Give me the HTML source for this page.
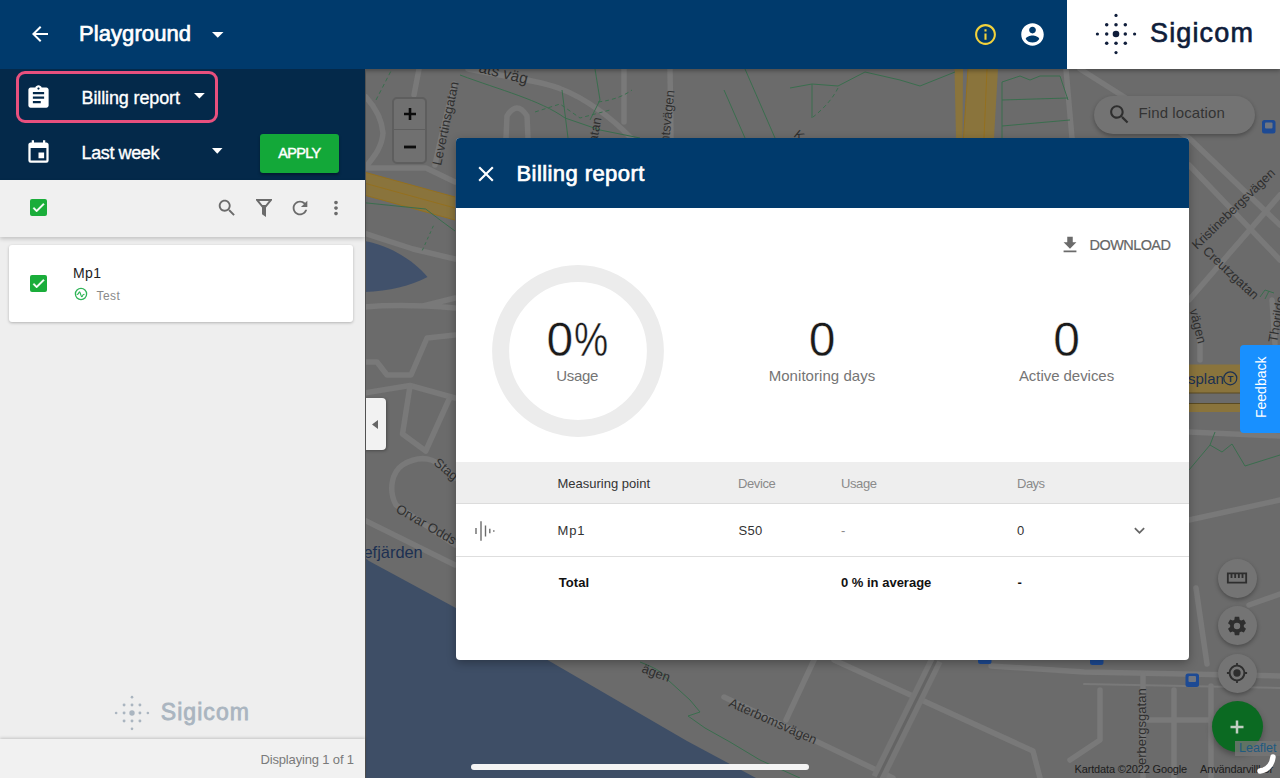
<!DOCTYPE html>
<html lang="en">
<head>
<meta charset="utf-8">
<title>Billing report</title>
<style>
*{box-sizing:border-box;margin:0;padding:0}
html,body{width:1280px;height:778px;overflow:hidden;background:#6b6b6b;font-family:"Liberation Sans",sans-serif;}
#map{position:absolute;left:364px;top:69px;width:916px;height:709px;background:#6b6b6b;overflow:hidden}
#hdr{position:absolute;left:0;top:0;width:1280px;height:69px;background:#003a6c;box-shadow:0 2px 4px rgba(0,0,0,.3)}
#logo{position:absolute;left:1067px;top:0;width:213px;height:69px;background:#fff}
#side{position:absolute;left:0;top:69px;width:365px;box-shadow:1px 0 0 #525252;height:709px;background:#eeeeee}
#dark{position:absolute;left:0;top:0;width:365px;height:111px;background:#04294a}
#tool{position:absolute;left:0;top:111px;width:365px;height:57px;background:#f0f0f0;box-shadow:0 2px 4px rgba(0,0,0,.18)}
#card{position:absolute;left:9px;top:176px;width:344px;height:77px;background:#fff;border-radius:3px;box-shadow:0 1px 3px rgba(0,0,0,.25)}
#foot{position:absolute;left:0;top:670px;width:365px;height:39px;background:#f1f1f1;box-shadow:0 -1px 3px rgba(0,0,0,.18)}
.cb{position:absolute;width:17px;height:17px;background:#1aad3a;border-radius:2px}
.cb svg{position:absolute;left:1px;top:1px;width:15px;height:15px}
#dlg{position:absolute;left:456px;top:138px;width:733px;height:522px;background:#fff;border-radius:4px;overflow:hidden;box-shadow:0 3px 10px rgba(0,0,0,.3)}
#dh{position:absolute;left:0;top:0;width:734px;height:70px;background:#003a6c}
#dli{position:absolute;left:-1px;top:0;width:734px;height:522px}
.big{-webkit-text-stroke:.45px #fff}
.t{position:absolute;white-space:nowrap;line-height:1}
.med{-webkit-text-stroke:.45px currentColor}
svg{position:absolute;overflow:visible}
.ic{fill:#6b6b6b}
.mt{font-family:"Liberation Sans",sans-serif;fill:#2f2f2f;font-size:13px}
</style>
</head>
<body>
<div id="map">
<svg width="916" height="709" viewBox="364 69 916 709" style="left:0;top:0">
  <!-- water -->
  <path d="M364 241 C385 244 412 258 427.500 277 C410 286 390 291 364 292Z" fill="#41516b"/>
  <path d="M364 557 L369 561 L454 607 L551 662 L687 741 L756 778 L364 778Z" fill="#3e4e66"/>
  <!-- light roads -->
  <g stroke="#797979" stroke-width="5.500" fill="none" stroke-linecap="round" stroke-linejoin="round">
    <path d="M468 69 C500 76 540 80 561 89 C585 98 612 118 631 138"/>
    <path d="M624 69 L624 122"/>
    <path d="M670 69 L671 138"/>
    <path d="M506 138 L507 116 Q517 100 527 116 L528 138"/>
    <path d="M454 84 C448 110 440 140 435 165"/>
    <path d="M366 97 C376 108 382 120 383 133 C382 146 376 155 364 169"/>
    <path d="M419 69 L414 95"/>
    <path d="M366 168 L426 168 L455 182"/>
    <path d="M364 233 L413 249 L455 259"/>
    <path d="M364 307 C400 304 430 306 455 308 M423 306 L455 298"/>
    <path d="M364 362 L377 362 L387 375 L411 375 L427 338 L455 335"/>
    <path d="M364 393 L410 385.500 L455 398"/>
    <path d="M410 386 L402.500 434 L425.700 451 L449 399.500"/>
    <path d="M455 478 C440 462 425.700 451 402.500 465 C392 472 388 490 396 505 L455 545"/>
    <path d="M364 520 L455 565"/>
    <path d="M1066 69 L1072 138"/>
    <path d="M1080 69 L1189 138 L1280 225"/>
    <path d="M1189 300 L1280 195"/>
    <path d="M1189 165 L1280 260"/>
    <path d="M1200 340 L1200 360 M1272 300 L1275 344"/>
    <path d="M1189 432 L1280 436"/>
    <path d="M1189 520 L1280 500"/>
    <path d="M1196 588 L1207 664"/>
    <path d="M1249 605 L1280 594"/>
    <path d="M724 697 L893 778"/>
    <path d="M834 660 L1033 751 L1040 778"/>
    <path d="M814 660 L786 720"/>
    <path d="M991 666 L1084 672 L1280 676"/>
    <path d="M1084 684 L1280 688" stroke-width="2"/>
    <path d="M1143 674 L1143 778"/>
    <path d="M1174 690 L1174 778"/>
    <path d="M1211 686 L1211 778"/>
    <path d="M1146 720 L1211 720"/>
    <path d="M1100 690 L1100 740 L1070 760"/>
  </g>
  <path d="M936 660 L878 778" stroke="#767676" stroke-width="14" fill="none"/>
  <path d="M936 660 L878 778" stroke="#646464" stroke-width="3" fill="none"/>
  <!-- yellow highways -->
  <path d="M364 172 L455 197 L455 220 L364 195Z" fill="#8a743c"/>
  <path d="M364 172 L455 197 M364 183 L455 208 M364 195 L455 220" stroke="#94701f" stroke-width="1" fill="none"/>
  <path d="M954.500 69 L963 69 L962.500 138 L956 138Z" fill="#8a743c"/>
  <path d="M968 69 L998 69 L994 138 L963.500 138Z" fill="#8a743c"/>
  <path d="M987 69 L984 138 M968 69 L963.500 138" stroke="#94701f" stroke-width="1" fill="none"/>
  <path d="M1189 364.500 L1240 364.500 L1240 393 L1189 393Z" fill="#8a743c"/>
  <path d="M1189 403.500 L1240 403.500 L1240 412 L1189 412Z" fill="#8a743c"/>
  <path d="M1189 393 L1240 393 M1189 403.500 L1240 403.500" stroke="#5a4a22" stroke-width="1" fill="none"/>
  <!-- green trails -->
  <g stroke="#3a6e4e" stroke-width="1" fill="none">
    <path d="M364 202.700 L425.700 209 L441 220.700 L455 231"/>
    <path d="M460 75 C500 90 540 100 565 118 L600 130 L640 138"/>
    <path d="M562 90 L568 138 M595 69 L600 100 L590 120" />
    <path d="M598 102 C615 100 625 95 632 90" stroke-dasharray="4 3"/>
    <path d="M535 112 L560 104 L580 118 L610 110" stroke-dasharray="4 3"/>
    <path d="M376 100 L392 69" stroke-dasharray="4 3"/>
    <path d="M433.400 225.800 L421.800 251.500" stroke-dasharray="3 3"/>
    <path d="M724 90 L745 138 M745 69 L775 138"/>
    <path d="M790 88 L812 84 L838 86 L865 72 L900 80 L920 86 L955 72"/>
    <path d="M812 84 L812 118" />
    <path d="M838 88 C832 100 822 110 813 117" stroke-dasharray="4 3"/>
    <path d="M1002 138 L1002 82 L1020 76 L1030 80 L1040 76 L1060 76 L1068 100"/>
    <path d="M1002 100 L1068 98 M1002 126 L1070 120"/>
    <path d="M640 662 C655 668 660 670 668 680 L690 700 L700 712 L688 716 L705 728 L730 742 L760 760 L800 778"/>
    <path d="M1189 470 L1210 445 L1215 432 M1210 445 L1222 452 L1232 444 L1245 466 L1280 455"/>
    <path d="M1260 297 L1265 290 L1274 293 M1269 291 L1265 299"/>
  </g>
  <!-- labels -->
  <text class="mt" transform="translate(441 166) rotate(-78)">Levertinsgatan</text>
  <text class="mt" style="font-size:12.800px" transform="translate(1197 250) rotate(-44)">Kristinebergsvägen</text>
  <text class="mt" transform="translate(1202 252) rotate(43)">Creutzgatan</text>
  <text class="mt" transform="translate(1189.500 310) rotate(76)">vägen</text>
  <text class="mt" transform="translate(1277 343) rotate(-80)">Thorilds</text>
  <text class="mt" transform="translate(728 706) rotate(24)">Atterbomsvägen</text>
  <text class="mt" transform="translate(641 672) rotate(20)">ägen</text>
  <text class="mt" transform="translate(1146 765) rotate(-90)">erbergsgatan</text>
  <text class="mt" transform="translate(395 511.500) rotate(30)">Orvar Odds</text>
  <text class="mt" transform="translate(433 464) rotate(40)">Stag</text>
  <text class="mt" transform="translate(669 143) rotate(-84)">htsvägen</text>
  <text class="mt" transform="translate(597 143) rotate(-80)">atan</text>
  <text class="mt" style="font-size:15.500px" transform="translate(478 72) rotate(14)">ats väg</text>
  <text class="mt" transform="translate(793 136) rotate(40)">K</text>
  <text class="mt" style="font-size:16.400px;fill:#1c3052" x="363.500" y="557.500">efjärden</text>
  <text class="mt" style="font-size:15px;fill:#1c3052" x="1188" y="384">splan</text>
  <circle cx="1230.300" cy="378.300" r="6.500" fill="none" stroke="#1c3052" stroke-width="1.200"/>
  <text class="mt" style="font-size:9.500px;fill:#1c3052;font-weight:700" x="1227.400" y="381.800">T</text>
  <!-- bus -->
  <g fill="#1d4a94">
  <rect x="1185.500" y="673.500" width="13.500" height="13.500" rx="2.500"/>
  <rect x="1262" y="120" width="13.500" height="13.500" rx="2.500"/>
  <rect x="1090" y="652" width="13.500" height="13" rx="2.500"/>
  <rect x="978" y="652" width="13.500" height="12" rx="2.500"/>
  </g>
  <g fill="#707680"><rect x="1188.500" y="676" width="7.500" height="6" rx="1"/><rect x="1265" y="122.500" width="7.500" height="6" rx="1"/></g>
</svg>

<!-- zoom control -->
<div style="position:absolute;left:28px;top:28px;width:35px;height:67px;background:#707070;border:2px solid #5e5e5e;border-radius:5px"></div>
<div style="position:absolute;left:30px;top:60px;width:31px;height:1px;background:#5e5e5e"></div>
<svg width="14" height="14" viewBox="0 0 14 14" style="left:38.500px;top:38px"><path d="M7 1v12M1 7h12" stroke="#0c0c0c" stroke-width="2.6" fill="none"/></svg>
<svg width="14" height="4" viewBox="0 0 14 4" style="left:38.500px;top:75.500px"><path d="M1 2h12" stroke="#0c0c0c" stroke-width="2.8" fill="none"/></svg>

<!-- find location -->
<div style="position:absolute;left:729.500px;top:26.500px;width:161px;height:38.500px;border-radius:20px;background:#737373;box-shadow:0 2px 4px rgba(0,0,0,.3)"></div>
<svg width="25" height="25" viewBox="0 0 24 24" style="left:742.700px;top:33px"><path fill="#2e2e2e" d="M15.500 14h-.79l-.28-.27C15.410 12.590 16 11.110 16 9.500 16 5.910 13.090 3 9.500 3S3 5.910 3 9.500 5.910 16 9.500 16c1.610 0 3.090-.59 4.230-1.570l.27.280v.79l5 4.990L20.490 19l-4.990-5zm-6 0C7.010 14 5 11.990 5 9.500S7.010 5 9.500 5 14 7.010 14 9.500 11.990 14 9.500 14z"/></svg>
<div class="t" style="left:774.500px;top:35.500px;font-size:15px;color:#333;letter-spacing:.1px">Find location</div>

<!-- feedback -->
<div style="position:absolute;left:875.500px;top:275.500px;width:41px;height:88px;background:#1890ff;border-radius:4px 0 0 4px"></div>
<div class="t" style="left:867px;top:312px;width:60px;text-align:center;font-size:14px;color:#fff;transform:rotate(-90deg);transform-origin:50% 50%">Feedback</div>

<!-- round buttons -->
<div style="position:absolute;left:853.500px;top:489.500px;width:39px;height:39px;border-radius:50%;background:#747474;box-shadow:0 2px 4px rgba(0,0,0,.3)"></div>
<div style="position:absolute;left:853.500px;top:537px;width:39px;height:39px;border-radius:50%;background:#747474;box-shadow:0 2px 4px rgba(0,0,0,.3)"></div>
<div style="position:absolute;left:853.500px;top:584.500px;width:39px;height:39px;border-radius:50%;background:#747474;box-shadow:0 2px 4px rgba(0,0,0,.3)"></div>
<svg width="22" height="22" viewBox="0 0 24 24" style="left:862px;top:498px"><path fill="#2e2e2e" d="M1 6v12h22V6H1zm20 10H3V8h2v4h2V8h2v4h2V8h2v4h2V8h2v4h2V8h2v8z"/></svg>
<svg width="22" height="22" viewBox="0 0 24 24" style="left:862px;top:545.500px"><path fill="#2e2e2e" d="M12,15.500A3.500,3.500 0 0,1 8.500,12A3.500,3.500 0 0,1 12,8.500A3.500,3.500 0 0,1 15.500,12A3.500,3.500 0 0,1 12,15.500M19.430,12.970C19.470,12.650 19.500,12.330 19.500,12C19.500,11.670 19.470,11.340 19.430,11L21.540,9.370C21.730,9.220 21.780,8.950 21.660,8.730L19.660,5.270C19.540,5.050 19.270,4.960 19.050,5.050L16.560,6.050C16.040,5.660 15.500,5.320 14.870,5.070L14.500,2.420C14.460,2.180 14.250,2 14,2H10C9.750,2 9.540,2.180 9.500,2.420L9.130,5.070C8.500,5.320 7.960,5.660 7.440,6.050L4.950,5.050C4.730,4.960 4.460,5.050 4.340,5.270L2.340,8.730C2.210,8.950 2.270,9.220 2.460,9.370L4.570,11C4.530,11.340 4.500,11.670 4.500,12C4.500,12.330 4.530,12.650 4.570,12.970L2.460,14.630C2.270,14.780 2.210,15.050 2.340,15.270L4.340,18.730C4.460,18.950 4.730,19.030 4.950,18.950L7.440,17.940C7.960,18.340 8.500,18.680 9.130,18.930L9.500,21.580C9.540,21.820 9.750,22 10,22H14C14.250,22 14.460,21.820 14.500,21.580L14.870,18.930C15.500,18.670 16.040,18.340 16.560,17.940L19.050,18.950C19.270,19.030 19.540,18.950 19.660,18.730L21.660,15.270C21.780,15.050 21.730,14.780 21.540,14.630L19.430,12.970Z"/></svg>
<svg width="22" height="22" viewBox="0 0 24 24" style="left:862px;top:593px"><path fill="#2e2e2e" d="M12,8A4,4 0 0,1 16,12A4,4 0 0,1 12,16A4,4 0 0,1 8,12A4,4 0 0,1 12,8M3.050,13H1V11H3.050C3.500,6.830 6.830,3.500 11,3.050V1H13V3.050C17.170,3.500 20.500,6.830 20.950,11H23V13H20.950C20.500,17.170 17.170,20.500 13,20.950V23H11V20.950C6.830,20.500 3.500,17.170 3.050,13M12,5A7,7 0 0,0 5,12A7,7 0 0,0 12,19A7,7 0 0,0 19,12A7,7 0 0,0 12,5Z"/></svg>

<!-- fab -->
<div style="position:absolute;left:847.500px;top:632px;width:51px;height:51px;border-radius:50%;background:#0b6a22;box-shadow:0 3px 6px rgba(0,0,0,.3)"></div>
<svg width="16" height="16" viewBox="0 0 16 16" style="left:865px;top:649.500px"><path d="M8 1.500v13M1.500 8h13" stroke="#c2cec2" stroke-width="2.500" fill="none"/></svg>

<!-- attribution -->
<div style="position:absolute;left:870.500px;top:671.500px;width:46px;height:15.500px;background:rgba(118,118,118,.8)"></div>
<div class="t" style="left:875px;top:673px;font-size:12.500px;color:#1f5a80">Leaflet</div>
<div class="t" style="left:710.500px;top:695px;font-size:11px;color:#1c1c1c;letter-spacing:-.15px">Kartdata ©2022 Google</div>
<div class="t" style="left:836px;top:695px;font-size:11px;color:#1c1c1c;letter-spacing:-.15px">Användarvillkor</div>
<svg width="20" height="20" viewBox="0 0 20 20" style="left:894px;top:685px"><path d="M2 17 C9 16 14 11 15 3" stroke="#fff" stroke-width="5.500" fill="none" stroke-linecap="round"/></svg>

<!-- home indicator -->
<div style="position:absolute;left:107px;top:694.500px;width:338px;height:6.500px;border-radius:4px;background:#f4f4f4"></div>

<!-- sidebar handle -->
<div style="position:absolute;left:0;top:329px;width:22px;height:52px;background:#f2f2f2;border-radius:0 4px 4px 0;box-shadow:1px 1px 3px rgba(0,0,0,.3)"></div>
<svg width="6" height="9" viewBox="0 0 6 9" style="left:7.500px;top:350.500px"><path d="M6 0v9L0 4.500z" fill="#666"/></svg>
</div>
<div id="hdr">
  <svg width="24" height="24" viewBox="0 0 24 24" style="left:28px;top:22.300px"><path fill="#fff" d="M20 11H7.830l5.590-5.590L12 4l-8 8 8 8 1.410-1.410L7.830 13H20v-2z"/></svg>
  <div class="t" style="left:79px;top:22.500px;font-size:22px;color:#fff;letter-spacing:.08px;-webkit-text-stroke:.7px #fff">Playground</div>
  <svg width="12" height="6" viewBox="0 0 12 6" style="left:211.500px;top:31.500px"><path d="M0 0h11.500L5.750 5.700z" fill="#fff"/></svg>
  <svg width="25" height="25" viewBox="0 0 24 24" style="left:972.800px;top:21.500px"><path fill="#f2d23c" d="M11 7h2v2h-2zm0 4h2v6h-2zm1-9C6.480 2 2 6.480 2 12s4.480 10 10 10 10-4.480 10-10S17.520 2 12 2zm0 18c-4.410 0-8-3.590-8-8s3.590-8 8-8 8 3.590 8 8-3.590 8-8 8z"/></svg>
  <svg width="27" height="27" viewBox="0 0 24 24" style="left:1018.500px;top:20.500px"><path fill="#fff" d="M12 2C6.480 2 2 6.480 2 12s4.480 10 10 10 10-4.480 10-10S17.520 2 12 2zm0 3c1.660 0 3 1.340 3 3s-1.340 3-3 3-3-1.340-3-3 1.340-3 3-3zm0 14.200c-2.500 0-4.710-1.280-6-3.220.03-1.990 4-3.080 6-3.080 1.990 0 5.970 1.090 6 3.080-1.290 1.940-3.500 3.220-6 3.220z"/></svg>
  <div id="logo">
    <svg width="60" height="60" viewBox="-30 -30 60 60" style="left:18.600px;top:3.800px" fill="#0f1d3a">
      <circle cx="0" cy="0" r="3.300"/>
      <circle cx="9.300" cy="0" r="1.750"/><circle cx="-9.300" cy="0" r="1.750"/>
      <circle cx="0" cy="9.300" r="1.750"/><circle cx="0" cy="-9.300" r="1.750"/>
      <circle cx="9.300" cy="9.300" r="1.750"/><circle cx="-9.300" cy="9.300" r="1.750"/>
      <circle cx="9.300" cy="-9.300" r="1.750"/><circle cx="-9.300" cy="-9.300" r="1.750"/>
      <circle cx="18.600" cy="0" r="1.600"/><circle cx="-18.600" cy="0" r="1.600"/>
      <circle cx="0" cy="18.600" r="1.600"/><circle cx="0" cy="-18.600" r="1.600"/>
    </svg>
    <div class="t" style="left:83px;top:20.300px;font-size:27px;color:#0f1d3a;-webkit-text-stroke:.65px #0f1d3a;letter-spacing:1.150px">Sigicom</div>
  </div>
</div>
<div id="side">
  <div id="dark">
    <div style="position:absolute;left:16.300px;top:2px;width:202px;height:52px;border:3.300px solid #e8507e;border-radius:9px"></div>
    <svg width="27" height="27" viewBox="0 0 24 24" style="left:25px;top:15px"><path fill="#fff" d="M19 3h-4.180C14.400 1.840 13.300 1 12 1c-1.300 0-2.400.84-2.820 2H5c-1.100 0-2 .9-2 2v14c0 1.100.9 2 2 2h14c1.100 0 2-.9 2-2V5c0-1.100-.9-2-2-2zm-7 0c.55 0 1 .45 1 1s-.45 1-1 1-1-.45-1-1 .45-1 1-1zm2 14H7v-2h7v2zm3-4H7v-2h10v2zm0-4H7V7h10v2z"/></svg>
    <div class="t" style="left:81.500px;top:19.500px;font-size:18px;color:#fff;letter-spacing:-.12px;-webkit-text-stroke:.35px #fff">Billing report</div>
    <svg width="11" height="6" viewBox="0 0 11 6" style="left:194px;top:24.200px"><path d="M0 0h10.800L5.400 5.400z" fill="#fff"/></svg>

    <svg width="27" height="27" viewBox="0 0 24 24" style="left:25px;top:70.400px"><path fill="#fff" d="M19,19H5V8H19M16,1V3H8V1H6V3H5C3.890,3 3,3.890 3,5V19A2,2 0 0,0 5,21H19A2,2 0 0,0 21,19V5C21,3.890 20.100,3 19,3H18V1M17,12H12V17H17V12Z"/></svg>
    <div class="t" style="left:81.500px;top:75.300px;font-size:18px;color:#fff;letter-spacing:-.38px;-webkit-text-stroke:.35px #fff">Last week</div>
    <svg width="11" height="6" viewBox="0 0 11 6" style="left:211.900px;top:79px"><path d="M0 0h10.500L5.250 5.700z" fill="#fff"/></svg>
    <div style="position:absolute;left:260px;top:65px;width:79px;height:38.500px;background:#13a839;border-radius:3px;box-shadow:0 2px 3px rgba(0,0,0,.35)"></div>
    <div class="t med" style="left:278.300px;top:77.300px;font-size:14.500px;color:#fff;letter-spacing:-.7px">APPLY</div>
  </div>
  <div id="tool">
    <div class="cb" style="left:30px;top:19px"><svg viewBox="0 0 24 24"><path fill="#fff" d="M9 16.170L4.830 12l-1.420 1.410L9 19 21 7l-1.410-1.410z" stroke="#fff" stroke-width="1.200"/></svg></div>
    <svg width="22" height="22" viewBox="0 0 24 24" style="left:216px;top:16.500px" class="ic"><path d="M15.500 14h-.79l-.28-.27C15.410 12.590 16 11.110 16 9.500 16 5.910 13.090 3 9.500 3S3 5.910 3 9.500 5.910 16 9.500 16c1.610 0 3.090-.59 4.230-1.570l.27.280v.79l5 4.990L20.490 19l-4.990-5zm-6 0C7.010 14 5 11.990 5 9.500S7.010 5 9.500 5 14 7.010 14 9.500 11.990 14 9.500 14z"/></svg>
    <svg width="24" height="24" viewBox="0 0 24 24" style="left:252px;top:15.500px" class="ic"><path fill-rule="evenodd" d="M4 3h16v1.300l-6 7.200v9.500l-4-2.800v-6.700l-6-7.200zM7.200 5l3.200 4h3.200l3.200-4z"/></svg>
    <svg width="22" height="22" viewBox="0 0 24 24" style="left:288.500px;top:16.500px" class="ic"><path d="M17.650 6.350C16.200 4.900 14.210 4 12 4c-4.420 0-7.990 3.580-7.990 8s3.570 8 7.990 8c3.730 0 6.840-2.550 7.730-6h-2.080c-.82 2.330-3.040 4-5.650 4-3.310 0-6-2.690-6-6s2.690-6 6-6c1.660 0 3.140.69 4.220 1.780L13 11h7V4l-2.350 2.350z"/></svg>
    <svg width="22" height="22" viewBox="0 0 24 24" style="left:324.600px;top:16.700px" class="ic"><path d="M12 8c1.100 0 2-.9 2-2s-.9-2-2-2-2 .9-2 2 .9 2 2 2zm0 2c-1.100 0-2 .9-2 2s.9 2 2 2 2-.9 2-2-.9-2-2-2zm0 6c-1.100 0-2 .9-2 2s.9 2 2 2 2-.9 2-2-.9-2-2-2z"/></svg>
  </div>
  <div id="card">
    <div class="cb" style="left:21px;top:30px"><svg viewBox="0 0 24 24"><path fill="#fff" d="M9 16.170L4.830 12l-1.420 1.410L9 19 21 7l-1.410-1.410z" stroke="#fff" stroke-width="1.200"/></svg></div>
    <div class="t" style="left:64px;top:20.500px;font-size:14px;color:#222;letter-spacing:.35px">Mp1</div>
    <svg width="14" height="14" viewBox="0 0 14 14" style="left:64.600px;top:42.300px"><circle cx="7" cy="7" r="5.600" fill="none" stroke="#2fb457" stroke-width="1.300"/><path d="M3.200 7.400c.8 0 1.100-.2 1.500-1.400.5-1.500 1-1.500 1.500 0l.9 2.600c.5 1.500 1 1.500 1.500 0 .4-1.200.7-1.400 1.500-1.400" fill="none" stroke="#2fb457" stroke-width="1.150" stroke-linecap="round"/></svg>
    <div class="t" style="left:87.500px;top:44.500px;font-size:12px;color:#8a8a8a;letter-spacing:.45px">Test</div>
  </div>
  <svg width="60" height="60" viewBox="-30 -30 60 60" style="left:101.600px;top:613.600px" fill="#aab5c0">
    <circle cx="0" cy="0" r="2.700"/>
    <circle cx="7.930" cy="0" r="1.450"/><circle cx="-7.930" cy="0" r="1.450"/>
    <circle cx="0" cy="7.930" r="1.450"/><circle cx="0" cy="-7.930" r="1.450"/>
    <circle cx="7.930" cy="7.930" r="1.450"/><circle cx="-7.930" cy="7.930" r="1.450"/>
    <circle cx="7.930" cy="-7.930" r="1.450"/><circle cx="-7.930" cy="-7.930" r="1.450"/>
    <circle cx="15.860" cy="0" r="1.300"/><circle cx="-15.860" cy="0" r="1.300"/>
    <circle cx="0" cy="15.860" r="1.300"/><circle cx="0" cy="-15.860" r="1.300"/>
  </svg>
  <div class="t" style="left:160.800px;top:632.200px;font-size:23px;color:#aab5c0;-webkit-text-stroke:.8px #aab5c0;letter-spacing:1.050px">Sigicom</div>
  <div id="foot">
    <div class="t" style="left:260.500px;top:13.500px;font-size:13px;color:#7a7a7a;letter-spacing:-.16px">Displaying 1 of 1</div>
  </div>
</div>
<div id="dlg"><div id="dli">
  <div id="dh">
    <svg width="26" height="26" viewBox="0 0 24 24" style="left:18.300px;top:22.600px"><path fill="#fff" d="M19 6.410L17.590 5 12 10.590 6.410 5 5 6.410 10.590 12 5 17.590 6.410 19 12 13.410 17.590 19 19 17.590 13.410 12z"/></svg>
    <div class="t" style="left:61.500px;top:25px;font-size:22px;color:#fff;letter-spacing:.42px;-webkit-text-stroke:.7px #fff">Billing report</div>
  </div>
  <svg width="22" height="22" viewBox="0 0 24 24" style="left:604px;top:96px"><path fill="#6b6b6b" d="M5,20H19V18H5M19,9H15V3H9V9H5L12,16L19,9Z"/></svg>
  <div class="t" style="left:634.600px;top:99.500px;font-size:14.500px;color:#666;letter-spacing:-.58px;-webkit-text-stroke:.2px #666">DOWNLOAD</div>

  <svg width="172" height="172" viewBox="0 0 172 172" style="left:36.800px;top:126.900px"><circle cx="86" cy="86" r="77.400" fill="none" stroke="#ececec" stroke-width="17"/></svg>
  <div class="t big" style="left:91.500px;top:178.200px;font-size:48px;color:#1a1a1a">0</div><div class="t big" style="left:119.300px;top:178.200px;font-size:48px;color:#1a1a1a;transform:scaleX(.8);transform-origin:0 0">%</div>
  <div class="t" style="left:22.100px;width:200px;text-align:center;top:229.500px;font-size:15px;color:#757575;letter-spacing:-.35px">Usage</div>

  <div class="t big" style="left:267px;width:200px;text-align:center;top:178.200px;font-size:48px;color:#1a1a1a">0</div>
  <div class="t" style="left:267px;width:200px;text-align:center;top:229.500px;font-size:15px;color:#757575;letter-spacing:.05px">Monitoring days</div>

  <div class="t big" style="left:511.500px;width:200px;text-align:center;top:178.200px;font-size:48px;color:#1a1a1a">0</div>
  <div class="t" style="left:511.500px;width:200px;text-align:center;top:229.500px;font-size:15px;color:#757575;letter-spacing:-.05px">Active devices</div>

  <div style="position:absolute;left:0;top:324px;width:734px;height:42px;background:#eeeeee;border-bottom:1px solid #dcdcdc"></div>
  <div class="t" style="left:102.500px;top:338.500px;font-size:13px;color:#333">Measuring point</div>
  <div class="t" style="left:283px;top:338.500px;font-size:13px;color:#8a8a8a;letter-spacing:-.4px">Device</div>
  <div class="t" style="left:386px;top:338.500px;font-size:13px;color:#8a8a8a;letter-spacing:-.4px">Usage</div>
  <div class="t" style="left:562px;top:338.500px;font-size:13px;color:#8a8a8a;letter-spacing:-.5px">Days</div>

  <svg width="22" height="22" viewBox="0 0 22 22" style="left:18.500px;top:381.500px"><g stroke="#6b6b6b" stroke-width="1.400" fill="none"><path d="M2 8v6M7 1.300v19.400M11.500 5.600v10.800M15.800 8.800v4.400M19.800 10.200v1.600"/></g></svg>
  <div class="t" style="left:102.500px;top:385.500px;font-size:13px;color:#333;letter-spacing:.8px">Mp1</div>
  <div class="t" style="left:283.500px;top:385.500px;font-size:13px;color:#333;letter-spacing:.3px">S50</div>
  <div class="t" style="left:386px;top:385.500px;font-size:13px;color:#8a8a8a">-</div>
  <div class="t" style="left:562px;top:385.500px;font-size:13px;color:#333">0</div>
  <svg width="21" height="21" viewBox="0 0 24 24" style="left:673.500px;top:381.500px"><path fill="#666" d="M7.410,8.580L12,13.170L16.590,8.580L18,10L12,16L6,10L7.410,8.580Z"/></svg>
  <div style="position:absolute;left:0;top:418px;width:734px;height:1px;background:#dedede"></div>

  <div class="t" style="left:103.700px;top:438px;font-size:13px;color:#111;font-weight:700;letter-spacing:.1px">Total</div>
  <div class="t" style="left:386px;top:438px;font-size:13px;color:#111;font-weight:700">0 % in average</div>
  <div class="t" style="left:562.500px;top:438px;font-size:13px;color:#111;font-weight:700">-</div>
</div></div>
</body>
</html>
